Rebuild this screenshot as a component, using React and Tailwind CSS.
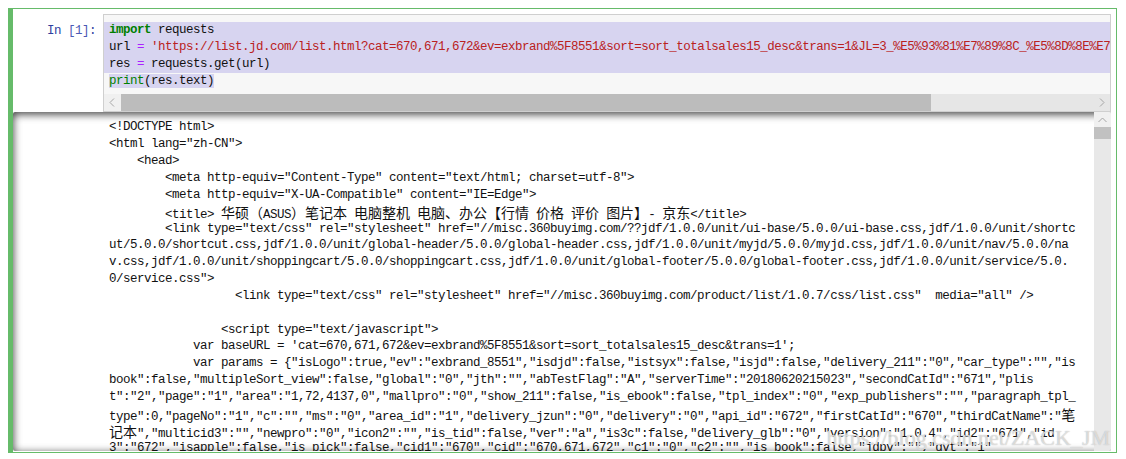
import React from 'react';

const CJK = /([\u3000-\u303f\u3400-\u9fff\uff00-\uffef]+)/;

function Mixed({ text }) {
  const parts = text.split(CJK);
  return parts.map((p, i) =>
    CJK.test(p) ? (
      <span key={i} className="font-['Noto_Sans_CJK_SC',sans-serif] text-[14px] tracking-normal text-[#111]">
        {p}
      </span>
    ) : (
      <React.Fragment key={i}>{p}</React.Fragment>
    )
  );
}

const outputLines = [
  '<!DOCTYPE html>',
  '<html lang="zh-CN">',
  '    <head>',
  '        <meta http-equiv="Content-Type" content="text/html; charset=utf-8">',
  '        <meta http-equiv="X-UA-Compatible" content="IE=Edge">',
  '        <title> 华硕（ASUS）笔记本 电脑整机 电脑、办公【行情 价格 评价 图片】- 京东</title>',
  '        <link type="text/css" rel="stylesheet" href="//misc.360buyimg.com/??jdf/1.0.0/unit/ui-base/5.0.0/ui-base.css,jdf/1.0.0/unit/shortc',
  'ut/5.0.0/shortcut.css,jdf/1.0.0/unit/global-header/5.0.0/global-header.css,jdf/1.0.0/unit/myjd/5.0.0/myjd.css,jdf/1.0.0/unit/nav/5.0.0/na',
  'v.css,jdf/1.0.0/unit/shoppingcart/5.0.0/shoppingcart.css,jdf/1.0.0/unit/global-footer/5.0.0/global-footer.css,jdf/1.0.0/unit/service/5.0.',
  '0/service.css">',
  '                  <link type="text/css" rel="stylesheet" href="//misc.360buyimg.com/product/list/1.0.7/css/list.css"  media="all" />',
  '',
  '                <script type="text/javascript">',
  "            var baseURL = 'cat=670,671,672&ev=exbrand%5F8551&sort=sort_totalsales15_desc&trans=1';",
  '            var params = {"isLogo":true,"ev":"exbrand_8551","isdjd":false,"istsyx":false,"isjd":false,"delivery_211":"0","car_type":"","is',
  'book":false,"multipleSort_view":false,"global":"0","jth":"","abTestFlag":"A","serverTime":"20180620215023","secondCatId":"671","plis',
  't":"2","page":"1","area":"1,72,4137,0","mallpro":"0","show_211":false,"is_ebook":false,"tpl_index":"0","exp_publishers":"","paragraph_tpl_',
  'type":0,"pageNo":"1","c":"","ms":"0","area_id":"1","delivery_jzun":"0","delivery":"0","api_id":"672","firstCatId":"670","thirdCatName":"笔',
  '记本","multicid3":"","newpro":"0","icon2":"","is_tid":false,"ver":"a","is3c":false,"delivery_glb":"0","version":"1.0.4","id2":"671","id',
  '3":"672","isapple":false,"is_pick":false,"cid1":"670","cid":"670,671,672","c1":"0","c2":"","is_book":false,"jdpv":"","gvt":"1"',
];

const URL_TEXT =
  "'https://list.jd.com/list.html?cat=670,671,672&ev=exbrand%5F8551&sort=sort_totalsales15_desc&trans=1&JL=3_%E5%93%81%E7%89%8C_%E5%8D%8E%E7%A1%95%EF%BC%88ASUS%EF%BC%89'";

function Chevron({ dir }) {
  const pts = {
    left: '10,4.5 6,8.5 10,12.5',
    right: '7,4.5 11,8.5 7,12.5',
    up: '4.5,10 8.5,6 12.5,10',
  }[dir];
  return (
    <svg width="17" height="17" viewBox="0 0 17 17">
      <polyline points={pts} fill="none" stroke="#a6a6a6" strokeWidth="1" />
    </svg>
  );
}

export default function App() {
  return (
    <div className="w-[1126px] h-[459px] overflow-hidden bg-white pl-2 pt-2 font-['Liberation_Mono','Noto_Sans_CJK_SC',monospace] text-[12.5px] tracking-[-0.5px] leading-[16.85px] text-[#111]">
      <div className="relative w-[1109px] h-[445px] border border-[#66bb6a] border-l-[5px] pt-[5px] pr-[5px] pb-[1px] flex flex-col">
        {/* input row */}
        <div className="flex shrink-0">
          <div className="w-[90px] shrink-0 pr-[7px] pt-[8.5px] text-right text-[#303f9f] whitespace-pre">
            In <span className="text-[#4b59b5]">[1]</span>:
          </div>
          <div className="flex-1 min-w-0 border border-[#cfcfcf] bg-[#f7f7f7]">
            <div className="pt-[7px] pb-[4.6px] overflow-hidden whitespace-pre">
              <div className="bg-[#d7d4f0] pl-[5px]">
                <span className="font-bold text-[#008000]">import</span> requests
              </div>
              <div className="bg-[#d7d4f0] pl-[5px]">
                url <span className="text-[#aa22ff]">=</span>{' '}
                <span className="text-[#ba2121]">{URL_TEXT}</span>
              </div>
              <div className="bg-[#d7d4f0] pl-[5px]">
                res <span className="text-[#aa22ff]">=</span> requests.get(url)
              </div>
              <div className="pl-[5px]">
                <span className="bg-[#d7d4f0]">
                  <span className="text-[#008000]">print</span>(res.text)
                </span>
              </div>
            </div>
            {/* horizontal scrollbar */}
            <div className="flex h-[17px] bg-[#e6e6e6]">
              <div className="w-[17px] bg-[#f0f0f0]">
                <Chevron dir="left" />
              </div>
              <div className="w-[810px] bg-[#bcbcbc]" />
              <div className="flex-1" />
              <div className="w-[17px]">
                <Chevron dir="right" />
              </div>
            </div>
          </div>
        </div>

        {/* output area */}
        <div className="relative flex-1 min-h-0 flex rounded-[2px] overflow-hidden shadow-[inset_0_2px_8px_rgba(0,0,0,0.8)]">
          <div className="flex-1 min-w-0 pl-[96px] pt-[7.5px] overflow-hidden whitespace-pre">
            {outputLines.map((line, i) => (
              <div key={i} className="h-[16.85px]">
                <Mixed text={line} />
              </div>
            ))}
          </div>
          {/* vertical scrollbar */}
          <div className="w-[17px] shrink-0 flex flex-col bg-[#e8e8e8]">
            <div className="h-[15px] bg-[#f0f0f0] overflow-hidden">
              <Chevron dir="up" />
            </div>
            <div className="h-[12px] bg-[#c1c1c1]" />
          </div>
          <div className="absolute right-[1px] bottom-[2px] font-['Liberation_Serif',serif] text-[22px] tracking-normal leading-[22px] text-[rgba(255,255,255,0.55)] [text-shadow:0_0_1px_#a8a8a8]">
            https://blog.csdn.net/ZACK_JM
          </div>
        </div>
      </div>
    </div>
  );
}
